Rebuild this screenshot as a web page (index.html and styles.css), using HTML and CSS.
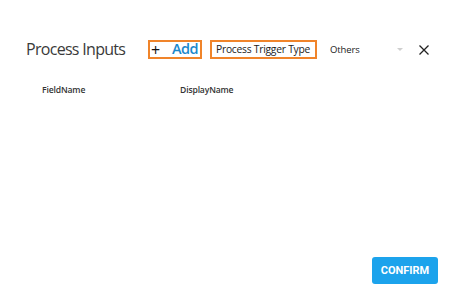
FILE: index.html
```html
<!DOCTYPE html>
<html>
<head>
<meta charset="utf-8">
<link rel="stylesheet" href="styles.css">
</head>
<body>
<div class="dialog">
  <div class="header">
    <h1 class="title">Process Inputs</h1>
    <button class="add"><span class="plus">+</span><span class="add-label">Add</span></button>
    <div class="trigger">Process Trigger Type</div>
    <div class="select">
      <span class="select-value">Others</span>
      <svg class="caret" width="6" height="3" viewBox="0 0 6 3"><path d="M0 0 L6 0 L3 3 Z" fill="#cfcfcf"/></svg>
    </div>
    <svg class="close" width="10" height="10" viewBox="0 0 10 10"><path d="M0.5 0.5 L9.5 9.5 M9.5 0.5 L0.5 9.5" stroke="#222" stroke-width="1.3"/></svg>
  </div>
  <div class="cols">
    <span class="col col-field">FieldName</span>
    <span class="col col-display">DisplayName</span>
  </div>
  <div class="spacer"></div>
  <div class="footer">
    <button class="confirm">CONFIRM</button>
  </div>
</div>
</body>
</html>
```
FILE: styles.css
```css
html, body {
  margin: 0;
  padding: 0;
  background: #ffffff;
}
body {
  width: 459px;
  height: 300px;
  font-family: "Open Sans", "Noto Sans", sans-serif;
  color: #222;
}
.dialog {
  display: flex;
  flex-direction: column;
  height: 300px;
  box-sizing: border-box;
  padding: 40px 21px 16px 26px;
}
.header {
  display: flex;
  align-items: center;
  height: 19px;
}
.title {
  margin: 0;
  font-size: 16px;
  font-weight: 400;
  color: #3a3a3a;
  width: 122px;
  white-space: nowrap;
  letter-spacing: -0.7px;
  line-height: 19px;
}
.add {
  box-sizing: border-box;
  height: 19px;
  width: 54px;
  border: 2px solid #f0842a;
  background: #fff;
  padding: 0 0 0 1px;
  display: flex;
  align-items: center;
  font-family: "Open Sans", sans-serif;
  margin: 0;
}
.plus {
  font-size: 16px;
  font-weight: 400;
  color: #111;
  width: 21px;
  text-align: left;
  line-height: 1;
}
.add-label {
  font-size: 14.5px;
  font-weight: 600;
  color: #1b88cc;
  line-height: 1;
  letter-spacing: -0.5px;
}
.trigger {
  box-sizing: border-box;
  height: 19px;
  margin-left: 8px;
  width: 107px;
  border: 2px solid #f0842a;
  font-size: 10.3px;
  letter-spacing: -0.25px;
  line-height: 15px;
  padding-left: 4px;
  color: #222;
  white-space: nowrap;
}
.select {
  display: flex;
  align-items: center;
  margin-left: 13px;
  width: 79px;
}
.select-value {
  font-size: 9.5px;
  letter-spacing: -0.1px;
  color: #222;
  flex: 1;
}
.caret {
  display: block;
  margin-right: 6px;
}
.close {
  display: block;
  margin-left: 10px;
}
.cols {
  display: flex;
  margin-top: 25px;
  padding-left: 16px;
  font-size: 8.6px;
  font-weight: 600;
  letter-spacing: -0.15px;
  color: #333;
}
.col-field {
  width: 138px;
}
.spacer {
  flex: 1;
}
.footer {
  display: flex;
  justify-content: flex-end;
}
.confirm {
  width: 66px;
  height: 27px;
  background: #1ca3ec;
  color: #fff;
  border: none;
  border-radius: 3px;
  font-family: Roboto, sans-serif;
  font-weight: 700;
  font-size: 11px;
  margin: 0;
  padding: 0;
}
```
